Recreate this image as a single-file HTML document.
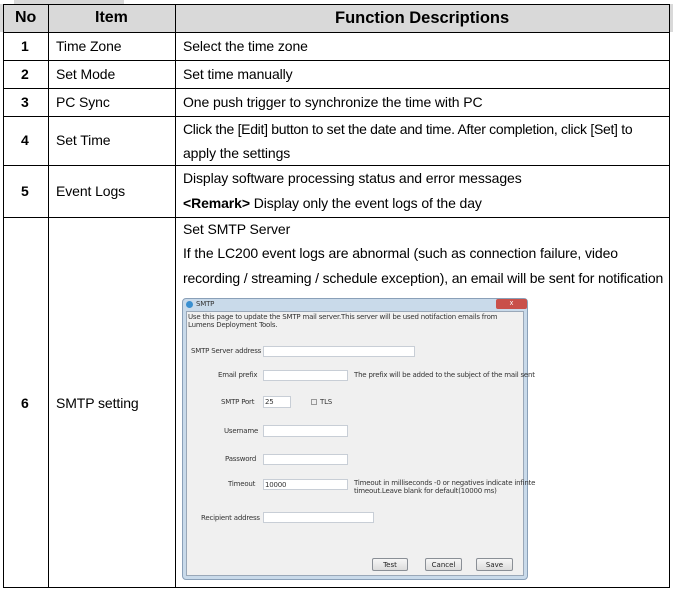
<!DOCTYPE html>
<html><head><meta charset="utf-8"><style>
*{margin:0;padding:0;box-sizing:border-box}
body{width:673px;height:594px;background:#fff;position:relative;overflow:hidden;font-family:"Liberation Sans",Arial,sans-serif;color:#000}
.a{position:absolute;white-space:nowrap}
.h{background:#000}
.t{font-size:14px;letter-spacing:-0.1px}
.b{font-weight:bold}
.d{font-size:7px;color:#333;font-family:"DejaVu Sans","Liberation Sans",sans-serif;letter-spacing:-0.2px}
.in{position:absolute;background:#fff;border:1px solid #c8ced6}
.btn{position:absolute;border:1px solid #8a8f96;border-radius:2px;background:linear-gradient(#f6f6f6,#dcdcdc);font-size:7px;text-align:center;line-height:12px;color:#222;font-family:"DejaVu Sans",sans-serif}
</style></head><body>
<div class="a" style="left:14px;top:0;width:110px;height:4px;background:#d8d8d8"></div>
<div class="a" style="left:0;top:4px;width:673px;height:28px;background:#d9d9d9"></div>
<div class="a h" style="left:3px;top:4px;width:667px;height:1px"></div>
<div class="a h" style="left:3px;top:32px;width:667px;height:1px"></div>
<div class="a h" style="left:3px;top:60px;width:667px;height:1px"></div>
<div class="a h" style="left:3px;top:88px;width:667px;height:1px"></div>
<div class="a h" style="left:3px;top:116px;width:667px;height:1px"></div>
<div class="a h" style="left:3px;top:165px;width:667px;height:1px"></div>
<div class="a h" style="left:3px;top:217px;width:667px;height:1px"></div>
<div class="a h" style="left:3px;top:587px;width:667px;height:1px"></div>
<div class="a h" style="left:3px;top:4px;width:1px;height:584px"></div>
<div class="a h" style="left:48px;top:4px;width:1px;height:584px"></div>
<div class="a h" style="left:175px;top:4px;width:1px;height:584px"></div>
<div class="a h" style="left:669px;top:4px;width:1px;height:584px"></div>
<div class="a b" style="left:15px;top:9px;font-size:16px">No</div>
<div class="a b" style="left:95px;top:9px;font-size:16px">Item</div>
<div class="a b" style="left:335px;top:9px;font-size:16.5px">Function Descriptions</div>
<div class="a t b" style="left:21px;top:38px">1</div>
<div class="a t" style="left:56px;top:38px">Time Zone</div>
<div class="a t" style="left:183px;top:38px">Select the time zone</div>
<div class="a t b" style="left:21px;top:66px">2</div>
<div class="a t" style="left:56px;top:66px">Set Mode</div>
<div class="a t" style="left:183px;top:66px">Set time manually</div>
<div class="a t b" style="left:21px;top:94px">3</div>
<div class="a t" style="left:56px;top:94px">PC Sync</div>
<div class="a t" style="left:183px;top:94px">One push trigger to synchronize the time with PC</div>
<div class="a t b" style="left:21px;top:132px">4</div>
<div class="a t" style="left:56px;top:132px">Set Time</div>
<div class="a t" style="left:183px;top:121px;letter-spacing:-0.3px">Click the [Edit] button to set the date and time. After completion, click [Set] to</div>
<div class="a t" style="left:183px;top:145px">apply the settings</div>
<div class="a t b" style="left:21px;top:183px">5</div>
<div class="a t" style="left:56px;top:183px">Event Logs</div>
<div class="a t" style="left:183px;top:170px">Display software processing status and error messages</div>
<div class="a t" style="left:183px;top:195px"><b>&lt;Remark&gt;</b> Display only the event logs of the day</div>
<div class="a t b" style="left:21px;top:395px">6</div>
<div class="a t" style="left:56px;top:395px">SMTP setting</div>
<div class="a t" style="left:183px;top:221px">Set SMTP Server</div>
<div class="a t" style="left:183px;top:245px">If the LC200 event logs are abnormal (such as connection failure, video</div>
<div class="a t" style="left:183px;top:270px;letter-spacing:-0.15px">recording / streaming / schedule exception), an email will be sent for notification</div>
<div class="a" style="left:182px;top:298px;width:346px;height:282px;background:#c9daea;border:1px solid #8aa0b8;border-radius:4px"></div>
<div class="a" style="left:186px;top:311px;width:338px;height:265px;background:#f0f0f0;border:1px solid #9aa8b8"></div>
<div class="a" style="left:186px;top:301px;width:7px;height:7px;border-radius:50%;background:#3a8fd0"></div>
<div class="a d" style="left:196px;top:300px">SMTP</div>
<div class="a" style="left:496px;top:299px;width:31px;height:10px;background:#c9504a;border-radius:2px;color:#fff;font-size:7px;text-align:center;line-height:10px">x</div>
<div class="a d" style="left:188px;top:313px">Use this page to update the SMTP mail server.This server will be used notifaction emails from</div>
<div class="a d" style="left:188px;top:321px">Lumens Deployment Tools.</div>
<div class="a d" style="left:191px;top:347px">SMTP Server address</div>
<div class="in" style="left:263px;top:346px;width:152px;height:11px"></div>
<div class="a d" style="left:218px;top:371px">Email prefix</div>
<div class="in" style="left:263px;top:370px;width:85px;height:11px"></div>
<div class="a d" style="left:354px;top:371px">The prefix will be added to the  subject  of the mail sent</div>
<div class="a d" style="left:221px;top:398px">SMTP Port</div>
<div class="in" style="left:263px;top:396px;width:28px;height:12px"></div>
<div class="a d" style="left:265px;top:398px">25</div>
<div class="a" style="left:311px;top:399px;width:6px;height:6px;border:1px solid #999;background:#eee"></div>
<div class="a d" style="left:320px;top:398px">TLS</div>
<div class="a d" style="left:224px;top:427px">Username</div>
<div class="in" style="left:263px;top:425px;width:85px;height:12px"></div>
<div class="a d" style="left:225px;top:455px">Password</div>
<div class="in" style="left:263px;top:454px;width:85px;height:11px"></div>
<div class="a d" style="left:228px;top:480px">Timeout</div>
<div class="in" style="left:263px;top:479px;width:85px;height:11px"></div>
<div class="a d" style="left:265px;top:481px">10000</div>
<div class="a d" style="left:354px;top:479px">Timeout in milliseconds -0 or negatives indicate infinte</div>
<div class="a d" style="left:354px;top:487px">timeout.Leave blank for default(10000 ms)</div>
<div class="a d" style="left:201px;top:514px">Recipient address</div>
<div class="in" style="left:263px;top:512px;width:111px;height:11px"></div>
<div class="btn" style="left:372px;top:558px;width:36px;height:13px">Test</div>
<div class="btn" style="left:425px;top:558px;width:37px;height:13px">Cancel</div>
<div class="btn" style="left:476px;top:558px;width:37px;height:13px">Save</div>
</body></html>
